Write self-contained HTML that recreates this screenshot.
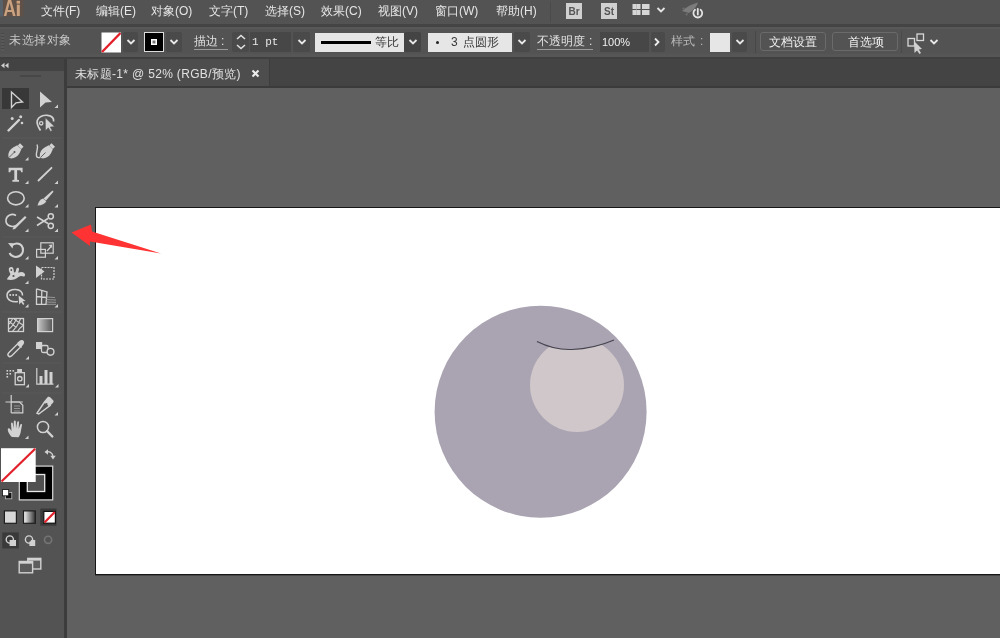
<!DOCTYPE html>
<html><head><meta charset="utf-8">
<style>
*{box-sizing:border-box;margin:0;padding:0}
html,body{width:1000px;height:638px;overflow:hidden;background:#606060;font-family:"Liberation Sans",sans-serif;position:relative}
.abs{position:absolute}
#menubar{left:0;top:0;width:1000px;height:24px;background:#535353}
#sep1{left:0;top:24px;width:1000px;height:3px;background:#444444}
#ctrl{left:0;top:27px;width:1000px;height:30px;background:#535353}
#sep2{left:0;top:57px;width:1000px;height:2px;background:#3f3f3f}
#sep2b{left:0;top:54px;width:1000px;height:3px;background:#565656}
#tabbar{left:67px;top:59px;width:933px;height:29px;background:#444444}
#tab{left:67px;top:59px;width:203px;height:28px;background:#4d4d4d;border-right:1px solid #3d3d3d}
#tabline{left:67px;top:86px;width:933px;height:2px;background:#3b3b3b}
#tools{left:0;top:59px;width:64px;height:579px;background:#535353}
#toolhead{left:0;top:59px;width:64px;height:12px;background:#434343}
#vline{left:64px;top:59px;width:3px;height:579px;background:#3c3c3c}
.menu{will-change:transform;top:3px;font-size:12px;color:#e6e6e6;line-height:16px;white-space:nowrap}
#artboard{left:95px;top:207px;width:920px;height:368px;background:#fff;border:1px solid #161616;box-shadow:0 1px 0 #454545}
.t{white-space:nowrap;will-change:transform}
.btn{background:#4a4a4a;border-radius:2px}
.bt{border:1px solid #6a6a6a;border-radius:3px;background:#535353}
</style></head><body>
<div class="abs" id="menubar"></div>
<div class="abs" id="sep1"></div>
<div class="abs" id="ctrl"></div><div class="abs" style="left:0;top:27px;width:1000px;height:2px;background:#585858"></div>
<div class="abs" id="sep2b"></div><div class="abs" id="sep2"></div>
<div class="abs" id="tabbar"></div>
<div class="abs" id="tab"></div>
<div class="abs" id="tabline"></div>
<div class="abs" id="tools"></div>
<div class="abs" id="toolhead"></div>
<div class="abs" id="vline"></div>

<!-- menu -->
<div class="abs menu" style="left:41px">文件(F)</div>
<div class="abs menu" style="left:96px">编辑(E)</div>
<div class="abs menu" style="left:151px">对象(O)</div>
<div class="abs menu" style="left:209px">文字(T)</div>
<div class="abs menu" style="left:265px">选择(S)</div>
<div class="abs menu" style="left:321px">效果(C)</div>
<div class="abs menu" style="left:378px">视图(V)</div>
<div class="abs menu" style="left:435px">窗口(W)</div>
<div class="abs menu" style="left:496px">帮助(H)</div>


<!-- control bar -->
<div class="abs" style="left:1px;top:33px;width:3px;height:18px;background:repeating-linear-gradient(#494949 0 1px,#595959 1px 3px)"></div>
<div class="abs t" style="left:9px;top:33px;font-size:12px;color:#c8c8c8;line-height:14px;letter-spacing:0.5px">未选择对象</div>
<!-- fill swatch -->
<svg class="abs" style="left:101px;top:32px" width="21" height="21"><rect x="0.5" y="0.5" width="19.5" height="20" fill="#fff"/><line x1="1" y1="20" x2="19.5" y2="1" stroke="#e2202a" stroke-width="2.4"/></svg>
<div class="abs btn" style="left:123px;top:32px;width:15px;height:20px"></div>
<!-- stroke swatch -->
<svg class="abs" style="left:144px;top:32px" width="20" height="20"><rect x="0.5" y="0.5" width="19" height="19" fill="#000" stroke="#dcdcdc"/><rect x="7" y="7" width="6" height="6" fill="#fff"/><rect x="8.5" y="8.5" width="3" height="3" fill="#777"/></svg>
<div class="abs btn" style="left:166px;top:32px;width:16px;height:20px"></div>
<div class="abs t" style="left:194px;top:34px;font-size:12px;color:#e0e0e0;line-height:14px">描边</div>
<div class="abs t" style="left:221px;top:34px;font-size:12px;color:#e0e0e0;line-height:14px">:</div>
<div class="abs" style="left:194px;top:49px;width:34px;height:1px;background:#9a9a9a"></div>
<div class="abs btn" style="left:232px;top:32px;width:17px;height:20px"></div>
<div class="abs" style="left:250px;top:32px;width:41px;height:20px;background:#474747"></div>
<div class="abs t" style="left:252px;top:35px;font-size:11px;color:#e8e8e8;line-height:14px;font-family:'Liberation Mono',monospace">1 pt</div>
<div class="abs btn" style="left:293px;top:32px;width:17px;height:20px"></div>
<div class="abs" style="left:315px;top:33px;width:89px;height:19px;background:#e6e6e6"></div>
<div class="abs" style="left:321px;top:41px;width:50px;height:3px;background:#000"></div>
<div class="abs t" style="left:375px;top:35px;font-size:12px;color:#383838;line-height:14px">等比</div>
<div class="abs btn" style="left:404px;top:32px;width:17px;height:20px;background:#444"></div>
<div class="abs" style="left:428px;top:33px;width:84px;height:19px;background:#e6e6e6"></div>
<div class="abs" style="left:436px;top:41px;width:3px;height:3px;border-radius:50%;background:#222"></div>
<div class="abs t" style="left:451px;top:35px;font-size:12px;color:#383838;line-height:14px">3</div>
<div class="abs t" style="left:463px;top:35px;font-size:12px;color:#383838;line-height:14px">点圆形</div>
<div class="abs btn" style="left:514px;top:32px;width:16px;height:20px"></div>
<div class="abs t" style="left:537px;top:34px;font-size:12px;color:#e0e0e0;line-height:14px">不透明度</div>
<div class="abs t" style="left:589px;top:34px;font-size:12px;color:#e0e0e0;line-height:14px">:</div>
<div class="abs" style="left:537px;top:49px;width:56px;height:1px;background:#9a9a9a"></div>
<div class="abs" style="left:600px;top:32px;width:49px;height:20px;background:#474747"></div>
<div class="abs t" style="left:602px;top:35px;font-size:11px;color:#f0f0f0;line-height:14px">100%</div>
<div class="abs btn" style="left:651px;top:32px;width:14px;height:20px"></div>
<div class="abs t" style="left:671px;top:34px;font-size:12px;color:#b8b8b8;line-height:14px">样式</div>
<div class="abs t" style="left:700px;top:34px;font-size:12px;color:#b8b8b8;line-height:14px">:</div>
<div class="abs" style="left:710px;top:33px;width:20px;height:19px;background:#e6e6e6"></div>
<div class="abs btn" style="left:732px;top:32px;width:15px;height:20px"></div>
<div class="abs" style="left:755px;top:31px;width:1px;height:22px;background:#474747"></div>
<div class="abs bt" style="left:760px;top:32px;width:66px;height:19px"></div>
<div class="abs t" style="left:769px;top:35px;font-size:12px;color:#f0f0f0;line-height:14px">文档设置</div>
<div class="abs bt" style="left:832px;top:32px;width:66px;height:19px"></div>
<div class="abs t" style="left:848px;top:35px;font-size:12px;color:#f0f0f0;line-height:14px">首选项</div>


<!-- logo -->
<svg class="abs" style="left:0;top:0" width="24" height="17">
<rect x="0" y="0" width="23.5" height="16.5" fill="#5f5148"/>
<rect x="0" y="0" width="3" height="16.5" fill="#58626b"/>
<path d="M3.8 16 L8 0 L11.2 0 L15.6 16 L13 16 L11.9 12 L7.3 12 L6.3 16 Z M7.8 10 L11.4 10 L9.6 3 Z" fill="#cba27f" fill-rule="evenodd"/>
<rect x="16.6" y="0.8" width="3.4" height="2.8" fill="#cba27f"/>
<rect x="16.8" y="4.6" width="3" height="11.4" fill="#cba27f"/>
</svg>
<div class="abs" style="left:550px;top:2px;width:1px;height:20px;background:#4a4a4a"></div>
<div class="abs" style="left:566px;top:3px;width:16px;height:16px;background:#d0d0d0"></div>
<div class="abs t" style="left:567px;top:5.5px;width:14px;text-align:center;font-size:10px;font-weight:bold;color:#555;line-height:12px">Br</div>
<div class="abs" style="left:601px;top:3px;width:16px;height:16px;background:#d0d0d0"></div>
<div class="abs t" style="left:602px;top:5.5px;width:14px;text-align:center;font-size:10px;font-weight:bold;color:#555;line-height:12px">St</div>
<svg class="abs" style="left:632px;top:4px" width="18" height="12"><rect x="0.5" y="0" width="8" height="5" fill="#d6d6d6"/><rect x="0.5" y="6" width="8" height="5" fill="#d6d6d6"/><rect x="10" y="0" width="7.5" height="5" fill="#d6d6d6"/><rect x="10" y="6" width="7.5" height="5" fill="#d6d6d6"/><line x1="4.5" y1="0" x2="4.5" y2="11" stroke="#b0b0b0" stroke-width="0.6"/></svg>
<svg class="abs" style="left:656px;top:6px" width="10" height="8"><polyline points="1.5,2 5,5.5 8.5,2" fill="none" stroke="#e6e6e6" stroke-width="1.8"/></svg>
<svg class="abs" style="left:680px;top:1px" width="26" height="20"><path d="M2 10 C6 6 12 3 18 1.5 C17 5 14 9 9 12 Z" fill="#7c7c7c"/><path d="M5 9 L2 8 L4 6 Z M8 12 L7 15 L5 13 Z" fill="#6e6e6e"/><path d="M15 8.7 A4.4 4.4 0 1 0 20.6 8.7" fill="none" stroke="#e2e2e2" stroke-width="1.8" stroke-linecap="round"/><line x1="17.8" y1="7.8" x2="17.8" y2="13.5" stroke="#e2e2e2" stroke-width="1.8" stroke-linecap="round"/></svg>
<svg class="abs" style="left:126px;top:38px" width="10" height="8"><polyline points="1.5,2 5,5.5 8.5,2" fill="none" stroke="#e8e8e8" stroke-width="1.8"/></svg>
<svg class="abs" style="left:169px;top:38px" width="10" height="8"><polyline points="1.5,2 5,5.5 8.5,2" fill="none" stroke="#e8e8e8" stroke-width="1.8"/></svg>
<svg class="abs" style="left:297px;top:38px" width="10" height="8"><polyline points="1.5,2 5,5.5 8.5,2" fill="none" stroke="#e8e8e8" stroke-width="1.8"/></svg>
<svg class="abs" style="left:408px;top:38px" width="10" height="8"><polyline points="1.5,2 5,5.5 8.5,2" fill="none" stroke="#e8e8e8" stroke-width="1.8"/></svg>
<svg class="abs" style="left:517px;top:38px" width="10" height="8"><polyline points="1.5,2 5,5.5 8.5,2" fill="none" stroke="#e8e8e8" stroke-width="1.8"/></svg>
<svg class="abs" style="left:735px;top:38px" width="10" height="8"><polyline points="1.5,2 5,5.5 8.5,2" fill="none" stroke="#e8e8e8" stroke-width="1.8"/></svg>
<svg class="abs" style="left:235px;top:33px" width="12" height="18"><polyline points="2,6 6,2.5 10,6" fill="none" stroke="#e0e0e0" stroke-width="1.6"/><polyline points="2,12 6,15.5 10,12" fill="none" stroke="#e0e0e0" stroke-width="1.6"/></svg>
<svg class="abs" style="left:653px;top:37px" width="8" height="10"><polyline points="2,1.5 5.5,5 2,8.5" fill="none" stroke="#ececec" stroke-width="1.8"/></svg>
<div class="abs" style="left:901px;top:31px;width:1px;height:22px;background:#4a4a4a"></div>
<svg class="abs" style="left:904px;top:31px" width="22" height="24"><rect x="4" y="7.5" width="6.5" height="7.5" fill="none" stroke="#d8d8d8" stroke-width="1.3"/><rect x="13" y="3" width="6.5" height="6.5" fill="none" stroke="#d8d8d8" stroke-width="1.3"/><path d="M10 10 L10.5 22 L13 19.5 L15.5 23 L17 22 L14.8 18.5 L18 18 Z" fill="#d0d0d0"/></svg>
<svg class="abs" style="left:929px;top:38px" width="10" height="8"><polyline points="1.5,2 5,5.5 8.5,2" fill="none" stroke="#e8e8e8" stroke-width="1.8"/></svg>
<svg class="abs" style="left:0px;top:62px" width="10" height="8"><polygon points="4.5,0.8 1,3.5 4.5,6.2" fill="#cfcfcf"/><polygon points="8.5,0.8 5,3.5 8.5,6.2" fill="#cfcfcf"/></svg>
<svg class="abs" style="left:251px;top:69px" width="9" height="9"><line x1="1.5" y1="1.5" x2="7.5" y2="7.5" stroke="#eee" stroke-width="2"/><line x1="7.5" y1="1.5" x2="1.5" y2="7.5" stroke="#eee" stroke-width="2"/></svg>


<!-- toolbar icons -->
<svg class="abs" style="left:0;top:0" width="64" height="638">
<rect x="20" y="75" width="21" height="2" fill="#474747"/>
<rect x="2" y="88" width="27" height="21" fill="#383838"/>
<g fill="none" stroke="#d2d2d2" stroke-width="1.4" stroke-linejoin="miter">
  <path d="M11.5 92 L11.5 107.5 L16 102.8 L22.5 102 Z"/>
</g>
<path d="M40 91.5 L40 107.5 L45.5 102.5 L52 102 Z" fill="#d2d2d2"/>
<path d="M58.0 104.5 L58.0 108.0 L54.5 108.0 Z" fill="#cfcfcf"/>
<!-- magic wand -->
<line x1="8.5" y1="130.5" x2="19" y2="120" stroke="#d2d2d2" stroke-width="2.4" stroke-linecap="round"/>
<circle cx="12.2" cy="118.5" r="1.5" fill="#d2d2d2"/><circle cx="20.7" cy="116.8" r="1.5" fill="#d2d2d2"/><circle cx="22" cy="123" r="1.3" fill="#d2d2d2"/>
<!-- lasso -->
<path d="M40.5 130.5 C38.5 127.5 36.5 124 37.3 120.5 C38.5 116.5 43.5 115 47.5 115.3 C51.5 115.8 54 118 53.6 121.5" fill="none" stroke="#d2d2d2" stroke-width="1.7"/>
<circle cx="41.2" cy="123.3" r="1.7" fill="none" stroke="#d2d2d2" stroke-width="1.3"/>
<path d="M45.3 117.8 L45.5 130.8 L48.3 127.8 L50.6 131.5 L52.2 130.5 L50.2 127 L54.5 126.6 Z" fill="#d2d2d2" stroke="#535353" stroke-width="0.5"/>
<rect x="2" y="137" width="60" height="2" fill="#565656"/>
<!-- pen -->
<path d="M8.3 156 C8 152.5 10 149.5 13.5 147.3 L17.3 145.3 L21.3 149.3 L19.5 153.3 C17.5 157 13.5 158.8 10.3 158.3 C9 158 8.4 157.2 8.3 156 Z" fill="#d2d2d2"/>
<path d="M17.8 145.5 L20 143.3 L23.5 146.8 L21.3 149 Z" fill="#d2d2d2"/>
<line x1="9" y1="157.5" x2="14" y2="152.5" stroke="#535353" stroke-width="0.9"/>
<circle cx="14.5" cy="152" r="1" fill="#535353"/>
<path d="M28.5 157 L28.5 160.5 L25 160.5 Z" fill="#cfcfcf"/>
<!-- curvature pen -->
<path d="M37 144.5 C39 148 35.5 152 36.5 156 C37 158 39.5 158 40.5 157" fill="none" stroke="#d2d2d2" stroke-width="1.4"/>
<path d="M39.8 156 C39.5 152.5 41.5 149.5 45 147.3 L48.8 145.3 L52.8 149.3 L51 153.3 C49 157 45 158.8 41.8 158.3 C40.5 158 39.9 157.2 39.8 156 Z" fill="#d2d2d2"/>
<path d="M49.3 145.5 L51.5 143.3 L55 146.8 L52.8 149 Z" fill="#d2d2d2"/>
<line x1="40.5" y1="157.5" x2="45.5" y2="152.5" stroke="#535353" stroke-width="0.9"/>
<!-- T -->
<path d="M8.6 167.8 L22.6 167.8 L22.6 172.2 L21.2 172.2 L20.4 170.3 L17.1 170.3 L17.1 179.8 L19 180 L19 181.8 L12.4 181.8 L12.4 180 L14.3 179.8 L14.3 170.3 L11 170.3 L10.2 172.2 L8.6 172.2 Z" fill="#d2d2d2"/>
<path d="M28.5 180.5 L28.5 184.0 L25 184.0 Z" fill="#cfcfcf"/>
<line x1="38.5" y1="180.5" x2="51.5" y2="167.8" stroke="#d2d2d2" stroke-width="1.8" stroke-linecap="round"/>
<path d="M58.0 180.5 L58.0 184.0 L54.5 184.0 Z" fill="#cfcfcf"/>
<!-- ellipse -->
<ellipse cx="15.9" cy="198.3" rx="8.3" ry="6.6" fill="none" stroke="#d2d2d2" stroke-width="1.6"/>
<path d="M28.5 204 L28.5 207.5 L25 207.5 Z" fill="#cfcfcf"/>
<!-- brush -->
<path d="M52.5 190.5 L53.5 191.8 L46 200.5 L43.5 198.5 Z" fill="#d2d2d2"/>
<path d="M43 198.5 L46.3 201.3 C45 204 42 205.5 37.5 205.5 C38.5 202 40 199.5 43 198.5 Z" fill="#d2d2d2"/>
<path d="M58.0 204 L58.0 207.5 L54.5 207.5 Z" fill="#cfcfcf"/>
<!-- shaper -->
<path d="M16 225.5 C11 228 5.5 225 6 220 C6.5 215 12 213 16 215.5" fill="none" stroke="#d2d2d2" stroke-width="1.6"/>
<path d="M25 216 L26.5 217.5 L15 229 L12.5 229.5 L13.5 227 Z" fill="#d2d2d2"/>
<path d="M28.5 228.5 L28.5 232.0 L25 232.0 Z" fill="#cfcfcf"/>
<!-- scissors -->
<path d="M37 217 L48 223.5 M37 225.5 L48 218.5" stroke="#d2d2d2" stroke-width="1.6"/>
<circle cx="50.8" cy="216.3" r="2.6" fill="none" stroke="#d2d2d2" stroke-width="1.5"/>
<circle cx="50.8" cy="225.8" r="2.6" fill="none" stroke="#d2d2d2" stroke-width="1.5"/>
<path d="M58.0 228.5 L58.0 232.0 L54.5 232.0 Z" fill="#cfcfcf"/>
<rect x="2" y="236" width="60" height="2" fill="#565656"/>
<!-- rotate -->
<path d="M12 245.5 C14 243 19 242.5 21.5 245.5 C24 248.5 23.5 254 19.5 256 C15.5 258 11 256.5 9.5 253" fill="none" stroke="#d2d2d2" stroke-width="2"/>
<path d="M8 243 L13.5 243.2 L12.5 248.5 Z" fill="#d2d2d2"/>
<path d="M28.5 256 L28.5 259.5 L25 259.5 Z" fill="#cfcfcf"/>
<!-- scale -->
<rect x="40.8" y="242.8" width="12.4" height="10.4" fill="none" stroke="#d2d2d2" stroke-width="1.2"/>
<rect x="36.6" y="249.4" width="8.8" height="7.8" fill="none" stroke="#d2d2d2" stroke-width="1.2"/>
<path d="M47 251 L51.5 246" stroke="#d2d2d2" stroke-width="1.3"/><path d="M48.5 245 L52 244.5 L51.8 248 Z" fill="#d2d2d2"/>
<path d="M58.0 256 L58.0 259.5 L54.5 259.5 Z" fill="#cfcfcf"/>
<!-- warp -->
<path d="M7 279.5 C7 277.5 9.5 276.5 10.3 274.5 C10.5 273 8.5 271.5 8.8 269 C9.2 266.8 12.2 266.3 13.3 268.5 C14 270 13.5 272 14.5 272.5 C15.8 273 16 270 16.5 268.5 C17.2 267 19.3 267.5 19 269.5 C18.8 271 18 272 18.5 272.8 C20 272 22.5 271.5 24.2 273 C25.8 274.5 25 277 23.5 276.5 C22 276 20.5 275.5 18.5 277 C15.5 279.5 12 280.5 7 279.5 Z" fill="#d2d2d2"/>
<circle cx="11.3" cy="270" r="0.9" fill="#535353"/><circle cx="13.5" cy="276" r="1.1" fill="#535353"/>
<path d="M28.5 280.5 L28.5 284.0 L25 284.0 Z" fill="#cfcfcf"/>
<!-- free transform -->
<rect x="41.5" y="267.5" width="12.5" height="11.5" fill="none" stroke="#d2d2d2" stroke-width="1.2" stroke-dasharray="2 1"/>
<path d="M36 265.5 L36 278 L44.5 271.5 Z" fill="#d2d2d2"/>
<!-- shape builder -->
<path d="M18 301.5 C12 302.5 7 300 7 295.5 C7 291 11.5 289.3 15.5 289.5 C20 289.8 22.5 292 22.5 295.5" fill="none" stroke="#d2d2d2" stroke-width="1.5"/>
<circle cx="10.2" cy="295" r="1" fill="#d2d2d2"/><circle cx="13.2" cy="295" r="1" fill="#d2d2d2"/><circle cx="16.2" cy="295" r="1" fill="#d2d2d2"/>
<path d="M18.6 295.5 L19.2 304.5 L21.2 302.3 L23.2 305 L24.4 304 L22.6 301.3 L25.6 301 Z" fill="#d2d2d2"/>
<path d="M28.5 304 L28.5 307.5 L25 307.5 Z" fill="#cfcfcf"/>
<!-- perspective -->
<path d="M36.5 288.8 L36.5 304.3 L47 304.3 M36.5 288.8 L47 292 L46 304.3 M36.5 296.5 L46.5 297.5 M41.8 290.5 L41.5 304.3" fill="none" stroke="#d2d2d2" stroke-width="1.3"/>
<path d="M46 297 L55 297.5 M46 299.6 L56 300 M46 302 L56 302.3 M46 304.3 L56 304.3" stroke="#a8a8a8" stroke-width="0.8"/>
<path d="M58.0 304 L58.0 307.5 L54.5 307.5 Z" fill="#cfcfcf"/>
<rect x="2" y="311" width="60" height="2" fill="#565656"/>
<!-- mesh -->
<rect x="8.5" y="318.5" width="15" height="13" fill="none" stroke="#d2d2d2" stroke-width="1.3"/>
<path d="M9 324 C11 322 12 320 12.5 319 M9 329 C12 327 14.5 323 16.5 319 M12.5 331.5 C15 329 18.5 324 20.5 319 M17.5 331.5 C19 329 21 327 23 325.5 M9 321.5 C12 323.5 14 325 16.5 328 M14 319 C17 321 19.5 323 23 325" fill="none" stroke="#d2d2d2" stroke-width="1.1"/>
<!-- gradient -->
<defs><linearGradient id="gr" x1="0" x2="1"><stop offset="0" stop-color="#c8c8c8"/><stop offset="1" stop-color="#555"/></linearGradient>
<linearGradient id="gr2" x1="0" x2="1"><stop offset="0" stop-color="#fafafa"/><stop offset="1" stop-color="#333"/></linearGradient></defs>
<rect x="37.6" y="318.6" width="15" height="13" fill="url(#gr)" stroke="#d2d2d2" stroke-width="1.2"/>
<!-- eyedropper -->
<path d="M8.5 356 C7.5 355 8 353.5 9 352.5 L17.5 344 L20.5 347 L12 355.5 C11 356.5 9.5 357 8.5 356 Z" fill="none" stroke="#d2d2d2" stroke-width="1.4"/>
<path d="M17 343 L20 340.5 C21.5 339.5 23.5 340 24 341.5 C24.5 343 23.5 344.5 22 346 L21.5 348 Z" fill="#d2d2d2"/>
<path d="M29.0 356 L29.0 359.5 L25.5 359.5 Z" fill="#cfcfcf"/>
<!-- blend -->
<rect x="36" y="342" width="6.2" height="7" fill="#d2d2d2"/>
<rect x="41.5" y="345.5" width="6.5" height="7" rx="1.5" fill="#535353" stroke="#d2d2d2" stroke-width="1.3"/>
<circle cx="50.5" cy="351.8" r="3.4" fill="#535353" stroke="#d2d2d2" stroke-width="1.4"/>
<rect x="2" y="362" width="60" height="2" fill="#565656"/>
<!-- symbol sprayer -->
<g fill="#d2d2d2"><rect x="6.5" y="370" width="1.6" height="1.6"/><rect x="9.5" y="370" width="1.6" height="1.6"/><rect x="12.5" y="370" width="1.6" height="1.6"/><rect x="6.5" y="373" width="1.6" height="1.6"/><rect x="9.5" y="373" width="1.6" height="1.6"/><rect x="6.5" y="376" width="1.6" height="1.6"/></g>
<rect x="17.2" y="369" width="4.8" height="3" fill="#d2d2d2"/>
<rect x="15.2" y="372.7" width="9.2" height="12" fill="none" stroke="#d2d2d2" stroke-width="1.3"/>
<circle cx="19.8" cy="378.7" r="2.2" fill="none" stroke="#d2d2d2" stroke-width="1.3"/>
<path d="M29.0 384 L29.0 387.5 L25.5 387.5 Z" fill="#cfcfcf"/>
<!-- graph -->
<path d="M36.8 368 L36.8 384.2 L53.5 384.2" fill="none" stroke="#d2d2d2" stroke-width="1.2"/>
<rect x="39.5" y="376" width="3" height="8" fill="#d2d2d2"/><rect x="44.5" y="370" width="3" height="14" fill="#d2d2d2"/><rect x="49.5" y="372" width="3" height="12" fill="#d2d2d2"/>
<path d="M58.5 384 L58.5 387.5 L55 387.5 Z" fill="#cfcfcf"/>
<rect x="2" y="392" width="60" height="2" fill="#565656"/>
<!-- artboard -->
<path d="M11.2 395 L11.2 413 M5.5 402 L22.8 402" stroke="#d2d2d2" stroke-width="1.2"/>
<path d="M11.2 402 L19.5 402 L22.8 405.3 L22.8 412.9 L11.2 412.9" fill="none" stroke="#d2d2d2" stroke-width="1.2"/>
<path d="M14 406 L20 406 M14 408.5 L20 408.5 M14 411 L20 411" stroke="#9a9a9a" stroke-width="0.9"/>
<!-- slice -->
<path d="M37 413.2 L44.5 402 L50 405.5 L38.8 414 Z" fill="none" stroke="#d2d2d2" stroke-width="1.5"/>
<path d="M44 401.5 L47.5 397.3 C48.5 396.5 49.5 396.7 50.2 397.3 L53.3 400.5 C53.8 401.2 53.6 402 53 402.7 L49.5 406.5 Z" fill="#d2d2d2"/>
<circle cx="46.5" cy="404" r="1.1" fill="#535353"/>
<path d="M58.0 412 L58.0 415.5 L54.5 415.5 Z" fill="#cfcfcf"/>
<!-- hand -->
<path d="M12 437 C9.5 435 7.5 431 7.8 429 C8.2 427.8 9.5 428 10.5 429.5 L11.5 431 L11 423.5 C11 422.3 12.6 422.3 12.8 423.5 L13.5 428.5 L13.8 421.5 C14 420.3 15.7 420.3 15.8 421.5 L16 428.5 L17.2 422 C17.5 420.9 19 421 19 422.3 L18.7 429 L20.3 424.5 C20.8 423.5 22.3 423.8 22 425 L20.8 431.5 C20.5 434 19.5 436 18.5 437.3 Z" fill="#d2d2d2"/>
<path d="M28.5 435.5 L28.5 439.0 L25 439.0 Z" fill="#cfcfcf"/>
<!-- zoom -->
<circle cx="43" cy="427" r="5.6" fill="none" stroke="#d2d2d2" stroke-width="1.5"/>
<line x1="47" y1="431" x2="52.3" y2="436.5" stroke="#d2d2d2" stroke-width="2.4" stroke-linecap="round"/>
</svg>


<!-- fill stroke -->
<svg class="abs" style="left:0;top:440px" width="64" height="140">
<rect x="19.3" y="26.1" width="33.4" height="33.8" fill="#000" stroke="#dadada" stroke-width="1.2"/>
<rect x="27.3" y="34.5" width="17.4" height="17" fill="#505050" stroke="#e8e8e8" stroke-width="1.3"/>
<rect x="1" y="8.2" width="34.7" height="33.8" fill="#fff"/>
<line x1="1.5" y1="41.5" x2="35.2" y2="8.7" stroke="#e2202a" stroke-width="2.2"/>
<path d="M46 12 C48.5 11 52 12 53 16" fill="none" stroke="#d2d2d2" stroke-width="1.3"/>
<path d="M44.5 12 L48 9.3 L48 14.7 Z" fill="#d2d2d2"/><path d="M53 19.5 L50.3 15.8 L55.7 15.8 Z" fill="#d2d2d2"/>
<rect x="5.5" y="52.5" width="6.3" height="6.3" fill="#111" stroke="#bbb" stroke-width="0.8"/>
<rect x="2.5" y="49.6" width="6.2" height="6.2" fill="#fff" stroke="#111" stroke-width="0.8"/>
<!-- color modes -->
<rect x="4.4" y="70.9" width="12" height="12.4" fill="#d8d8d8" stroke="#1e1e1e" stroke-width="1.2"/>
<rect x="23.5" y="70.9" width="11.8" height="12.4" fill="url(#gr2)" stroke="#1e1e1e" stroke-width="1.2"/>
<rect x="40.3" y="68.5" width="16.2" height="17.2" fill="#3a3a3a"/>
<rect x="43.8" y="71.4" width="11.6" height="11.8" fill="#fff" stroke="#111" stroke-width="1.2"/>
<line x1="44.5" y1="82.5" x2="54.8" y2="72" stroke="#e2202a" stroke-width="2.2"/>
<!-- draw modes -->
<rect x="2.3" y="92.4" width="16.5" height="16" fill="#3a3a3a"/>
<circle cx="9.8" cy="99.5" r="3.6" fill="none" stroke="#d2d2d2" stroke-width="1.4"/>
<rect x="9.6" y="100" width="6.4" height="6" fill="#d2d2d2"/>
<circle cx="29" cy="99.5" r="3.6" fill="#535353" stroke="#d2d2d2" stroke-width="1.4"/>
<rect x="29.4" y="100" width="5.8" height="6" fill="#d2d2d2"/>
<circle cx="29" cy="99.5" r="2.2" fill="#535353"/>
<circle cx="48.1" cy="99.8" r="3.6" fill="none" stroke="#747474" stroke-width="1.6"/>
<!-- screen mode -->
<rect x="27.8" y="118.4" width="13" height="10.6" fill="#5e5e5e" stroke="#d2d2d2" stroke-width="1.4"/>
<rect x="27.8" y="118.4" width="13" height="2.2" fill="#d2d2d2"/>
<rect x="19.2" y="121.5" width="13.4" height="11.3" fill="#5a5a5a" stroke="#d2d2d2" stroke-width="1.4"/>
<rect x="19.2" y="121.5" width="13.4" height="2.2" fill="#d2d2d2"/>
</svg>

<!-- tab -->
<div class="abs t" style="left:75px;top:66px;font-size:12px;color:#e0e0e0;line-height:16px;letter-spacing:0.33px">未标题-1* @ 52% (RGB/预览)</div>

<!-- artboard -->
<div class="abs" id="artboard"></div>
<svg class="abs" style="left:0;top:0" width="1000" height="638">
  <defs><clipPath id="cp"><path d="M0 0 L1000 0 L1000 638 L0 638 Z"/></clipPath></defs>
  <circle cx="540.6" cy="411.7" r="106" fill="#aaa4b2"/>
  <clipPath id="arcclip"><path d="M500 300 L537 341.5 C550 348 560 350 572 349.5 C588 349 600 346 614 340 L700 300 L700 500 L500 500 Z"/></clipPath>
  <circle cx="577" cy="385" r="47" fill="#cfc7ca" clip-path="url(#arcclip)"/>
  <path d="M537 341.5 C550 348 560 350 572 349.5 C588 349 600 346 614 340" fill="none" stroke="#45434d" stroke-width="1.1"/>
  <polygon points="71.5,232.5 91,224.5 92,231.5 161,253.5 90,241.5 90,246" fill="#ff3333"/>
</svg>
</body></html>
